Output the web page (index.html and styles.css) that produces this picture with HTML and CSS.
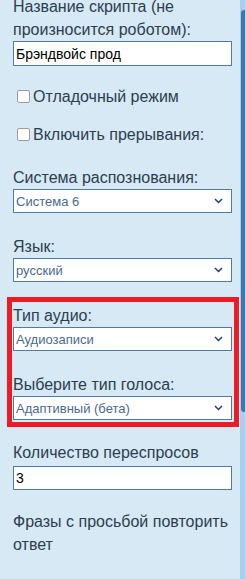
FILE: index.html
```html
<!DOCTYPE html>
<html>
<head>
  <meta charset="utf-8">
  <link rel="stylesheet" href="styles.css">
</head>
<body>
  <div class="page">
    <div class="settings">
      <div class="field">
        <label class="label" for="scriptName">Название скрипта (не произносится роботом):</label>
        <input type="text" id="scriptName" class="text-input" value="Брэндвойс прод">
      </div>

      <label class="check">
        <input type="checkbox" id="debugMode">
        <span>Отладочный режим</span>
      </label>
      <label class="check last-check">
        <input type="checkbox" id="interrupts">
        <span>Включить прерывания:</span>
      </label>

      <div class="field">
        <label class="label" for="asr">Система распознования:</label>
        <div class="select-wrap">
          <select id="asr" class="select">
            <option>Система 6</option>
          </select>
          <svg class="chevron" width="9" height="6" viewBox="0 0 9 6"><path d="M1 1 L4.5 4.5 L8 1" fill="none" stroke="#1f3f6e" stroke-width="1.5"/></svg>
        </div>
      </div>

      <div class="field">
        <label class="label" for="lang">Язык:</label>
        <div class="select-wrap">
          <select id="lang" class="select">
            <option>русский</option>
          </select>
          <svg class="chevron" width="9" height="6" viewBox="0 0 9 6"><path d="M1 1 L4.5 4.5 L8 1" fill="none" stroke="#1f3f6e" stroke-width="1.5"/></svg>
        </div>
      </div>

      <!-- highlighted block -->
      <div class="highlight">
        <div class="field">
          <label class="label" for="audioType">Тип аудио:</label>
          <div class="select-wrap">
            <select id="audioType" class="select">
              <option>Аудиозаписи</option>
            </select>
            <svg class="chevron" width="9" height="6" viewBox="0 0 9 6"><path d="M1 1 L4.5 4.5 L8 1" fill="none" stroke="#1f3f6e" stroke-width="1.5"/></svg>
          </div>
        </div>
        <div class="field last">
          <label class="label" for="voiceType">Выберите тип голоса:</label>
          <div class="select-wrap">
            <select id="voiceType" class="select">
              <option>Адаптивный (бета)</option>
            </select>
            <svg class="chevron" width="9" height="6" viewBox="0 0 9 6"><path d="M1 1 L4.5 4.5 L8 1" fill="none" stroke="#1f3f6e" stroke-width="1.5"/></svg>
          </div>
        </div>
      </div>

      <div class="field tight">
        <label class="label spaced" for="retries">Количество переспросов</label>
        <input type="text" id="retries" class="text-input short" value="3">
      </div>

      <div class="field">
        <label class="label">Фразы с просьбой повторить ответ</label>
      </div>
    </div>

    <div class="scrollbar">
      <div class="thumb"></div>
    </div>
  </div>
</body>
</html>
```

FILE: styles.css
```css
html, body {
  margin: 0;
  height: 100%;
  overflow: hidden;
}

body {
  background-color: #d6e9f5;
  font-family: "Liberation Sans", Arial, sans-serif;
  color: #2c3e50;
}

.page {
  display: flex;
  height: 579px;
}

.settings {
  flex: 1;
  display: flex;
  flex-direction: column;
  padding: 0 8px 0 13px;
  margin-top: -5px;
}

.field {
  display: flex;
  flex-direction: column;
  margin-bottom: 22px;
}

.field.last {
  margin-bottom: 0;
}

.field.tight {
  margin-bottom: 20px;
}

.settings > .field:first-child {
  margin-bottom: 19px;
}

.label {
  font-size: 16px;
  line-height: 23px;
}

.label.spaced {
  margin-bottom: 2px;
}

.text-input {
  box-sizing: border-box;
  width: 100%;
  height: 25px;
  margin: 0;
  padding: 0 2px;
  border: 1px solid #4f7ba2;
  background: #fff;
  font-family: "Liberation Sans", Arial, sans-serif;
  font-size: 14px;
  color: #000;
  outline: none;
}

.text-input.short {
  height: 24px;
}

.check {
  display: flex;
  align-items: center;
  height: 23px;
  margin-bottom: 15px;
  font-size: 16px;
  line-height: 23px;
}

.check.last-check {
  margin-bottom: 20px;
}

.check input {
  -webkit-appearance: none;
  appearance: none;
  box-sizing: border-box;
  margin: 0 3px 0 4px;
  width: 13px;
  height: 13px;
  border: 1px solid #9b9b9b;
  border-radius: 2px;
  background: #fff;
}

.select-wrap {
  position: relative;
}

.select {
  -webkit-appearance: none;
  appearance: none;
  box-sizing: border-box;
  width: 100%;
  height: 24px;
  margin: 0;
  padding: 0 20px 0 2px;
  border: 1px solid #4f7ba2;
  border-radius: 0;
  background: #fff;
  font-family: "Liberation Sans", Arial, sans-serif;
  font-size: 13px;
  color: #4a6a8e;
  outline: none;
}

.chevron {
  position: absolute;
  right: 9px;
  top: 9px;
  pointer-events: none;
}

.highlight {
  margin: -7px -7px 14px -6px;
  padding: 2px 2px 2px 1px;
  border: 5px solid #ed1c24;
}

.scrollbar {
  width: 4px;
  padding: 10px 0 0 1px;
  background-color: #a9cfef;
}

.thumb {
  height: 402px;
  background-color: #3b78ae;
  border-radius: 3px 0 0 3px;
}
```
